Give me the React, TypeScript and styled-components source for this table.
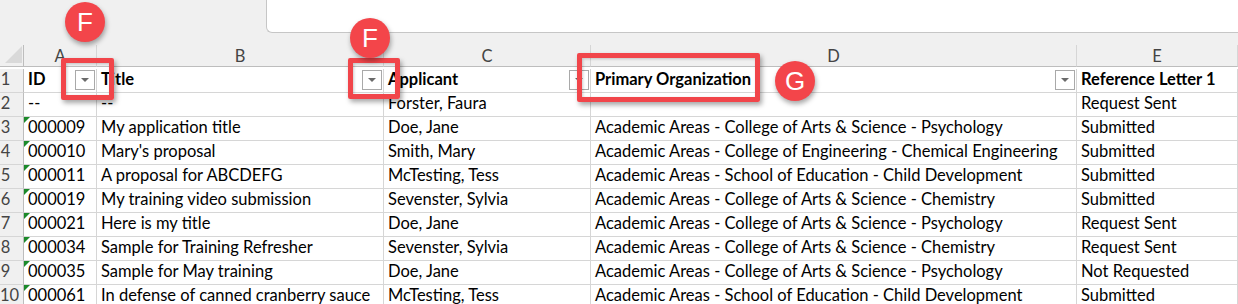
import React from "react";
import styled, { createGlobalStyle } from "styled-components";

const Global = createGlobalStyle`
  html, body { margin: 0; padding: 0; background: #ffffff; }
  body { width: 1238px; height: 304px; overflow: hidden; }
`;

const FONT = `"Lato", "Open Sans", sans-serif`;
const GRID = "#d6d6d6";
const HEAD_LINE = "#bdbdbd";

const Page = styled.div`
  position: relative;
  width: 1238px;
  height: 304px;
  overflow: hidden;
  font-family: ${FONT};
`;

const TopBand = styled.div`
  display: flex;
  height: 45px;
  background: #f0f0f0;
`;

const TopSpacer = styled.div`
  width: 266px;
`;

const TopPanel = styled.div`
  flex: 1;
  height: 33px;
  background: #ffffff;
  border-left: 1px solid #c6c6c6;
  border-bottom: 1px solid #c6c6c6;
  border-bottom-left-radius: 6px;
  box-sizing: border-box;
`;

const Sheet = styled.div`
  display: grid;
  grid-template-columns: 24px 73px 287px 207px 486px 161px;
  grid-auto-rows: 24px;
`;

const Corner = styled.div`
  height: 22px;
  background: #f0f0f0;
  border-right: 1px solid ${HEAD_LINE};
  border-bottom: 1px solid ${HEAD_LINE};
  box-sizing: border-box;
  display: flex;
  align-items: flex-end;
  padding: 0 1px 3px 5px;
`;

const ColHead = styled.div`
  height: 22px;
  background: #f0f0f0;
  border-right: 1px solid ${GRID};
  border-bottom: 1px solid ${HEAD_LINE};
  box-sizing: border-box;
  color: #444444;
  font-size: 16.5px;
  text-align: center;
  line-height: 22px;
`;

const RowHead = styled.div`
  background: #f0f0f0;
  border-right: 1px solid ${HEAD_LINE};
  border-bottom: 1px solid ${GRID};
  box-sizing: border-box;
  color: #444444;
  font-size: 16.5px;
  text-align: center;
  padding-right: 12px;
  line-height: 21px;
  white-space: nowrap;
`;

const Cell = styled.div<{ $bold?: boolean; $flag?: boolean }>`
  position: relative;
  display: flex;
  align-items: flex-start;
  border-right: 1px solid ${GRID};
  border-bottom: 1px solid ${GRID};
  box-sizing: border-box;
  padding-left: 4px;
  font-size: 16.5px;
  line-height: 21px;
  color: #000000;
  font-weight: ${(p) => (p.$bold ? 700 : 400)};
  white-space: nowrap;
  overflow: hidden;
  &::before {
    content: "";
    display: ${(p) => (p.$flag ? "block" : "none")};
    position: absolute;
    left: 0;
    top: 0;
    width: 0;
    height: 0;
    border-top: 6px solid #1b8a2a;
    border-right: 6px solid transparent;
  }
`;

const FilterBtn = styled.span`
  flex: none;
  margin: 1px 1px 0 auto;
  width: 20px;
  height: 20px;
  box-sizing: border-box;
  border: 1px solid #a9a9a9;
  background: #ffffff;
  display: flex;
  align-items: center;
  justify-content: center;
  &::after {
    content: "";
    width: 0;
    height: 0;
    border-left: 4px solid transparent;
    border-right: 4px solid transparent;
    border-top: 4px solid #6a6a6a;
  }
`;

const RedBox = styled.div`
  position: absolute;
  border: 5px solid #f1454a;
  border-radius: 2px;
  box-shadow: 2px 3px 5px rgba(0, 0, 0, 0.35), inset 1px 1px 3px rgba(0, 0, 0, 0.2);
  box-sizing: border-box;
  pointer-events: none;
`;

const Badge = styled.div`
  position: absolute;
  width: 40px;
  height: 40px;
  border-radius: 50%;
  background: #f3454a;
  box-shadow: 1px 3px 5px rgba(0, 0, 0, 0.35);
  color: #ffffff;
  font-family: "Liberation Sans", Arial, sans-serif;
  font-size: 26px;
  line-height: 40px;
  text-align: center;
`;

type Row = { id: string; title: string; applicant: string; org: string; ref: string; flag: boolean };

const rows: Row[] = [
  { id: "--", title: "--", applicant: "Forster, Faura", org: "", ref: "Request Sent", flag: false },
  { id: "000009", title: "My application title", applicant: "Doe, Jane", org: "Academic Areas - College of Arts & Science - Psychology", ref: "Submitted", flag: true },
  { id: "000010", title: "Mary's proposal", applicant: "Smith, Mary", org: "Academic Areas - College of Engineering - Chemical Engineering", ref: "Submitted", flag: true },
  { id: "000011", title: "A proposal for ABCDEFG", applicant: "McTesting, Tess", org: "Academic Areas - School of Education - Child Development", ref: "Submitted", flag: true },
  { id: "000019", title: "My training video submission", applicant: "Sevenster, Sylvia", org: "Academic Areas - College of Arts & Science - Chemistry", ref: "Submitted", flag: true },
  { id: "000021", title: "Here is my title", applicant: "Doe, Jane", org: "Academic Areas - College of Arts & Science - Psychology", ref: "Request Sent", flag: true },
  { id: "000034", title: "Sample for Training Refresher", applicant: "Sevenster, Sylvia", org: "Academic Areas - College of Arts & Science - Chemistry", ref: "Request Sent", flag: true },
  { id: "000035", title: "Sample for May training", applicant: "Doe, Jane", org: "Academic Areas - College of Arts & Science - Psychology", ref: "Not Requested", flag: true },
  { id: "000061", title: "In defense of canned cranberry sauce", applicant: "McTesting, Tess", org: "Academic Areas - School of Education - Child Development", ref: "Submitted", flag: true },
];

const headers = ["ID", "Title", "Applicant", "Primary Organization", "Reference Letter 1"];

export default function App() {
  return (
    <Page>
      <Global />
      <TopBand>
        <TopSpacer />
        <TopPanel />
      </TopBand>
      <Sheet>
        <Corner>
          <svg width="17" height="17" viewBox="0 0 17 17">
            <polygon points="17,0 17,17 0,17" fill="#d9d9d9" />
          </svg>
        </Corner>
        {["A", "B", "C", "D", "E"].map((l) => (
          <ColHead key={l}>{l}</ColHead>
        ))}
        <RowHead>1</RowHead>
        {headers.map((h, i) => (
          <Cell key={h} $bold>
            {h}
            {i < 4 && <FilterBtn />}
          </Cell>
        ))}
        {rows.map((r, i) => (
          <React.Fragment key={i}>
            <RowHead>{i + 2}</RowHead>
            <Cell $flag={r.flag}>{r.id}</Cell>
            <Cell>{r.title}</Cell>
            <Cell>{r.applicant}</Cell>
            <Cell>{r.org}</Cell>
            <Cell>{r.ref}</Cell>
          </React.Fragment>
        ))}
      </Sheet>
      <RedBox style={{ left: 61, top: 58, width: 53, height: 42 }} />
      <RedBox style={{ left: 348, top: 58, width: 52, height: 41 }} />
      <RedBox style={{ left: 577, top: 53, width: 183, height: 49 }} />
      <Badge style={{ left: 65, top: 2 }}>F</Badge>
      <Badge style={{ left: 350, top: 18 }}>F</Badge>
      <Badge style={{ left: 775, top: 61 }}>G</Badge>
    </Page>
  );
}
